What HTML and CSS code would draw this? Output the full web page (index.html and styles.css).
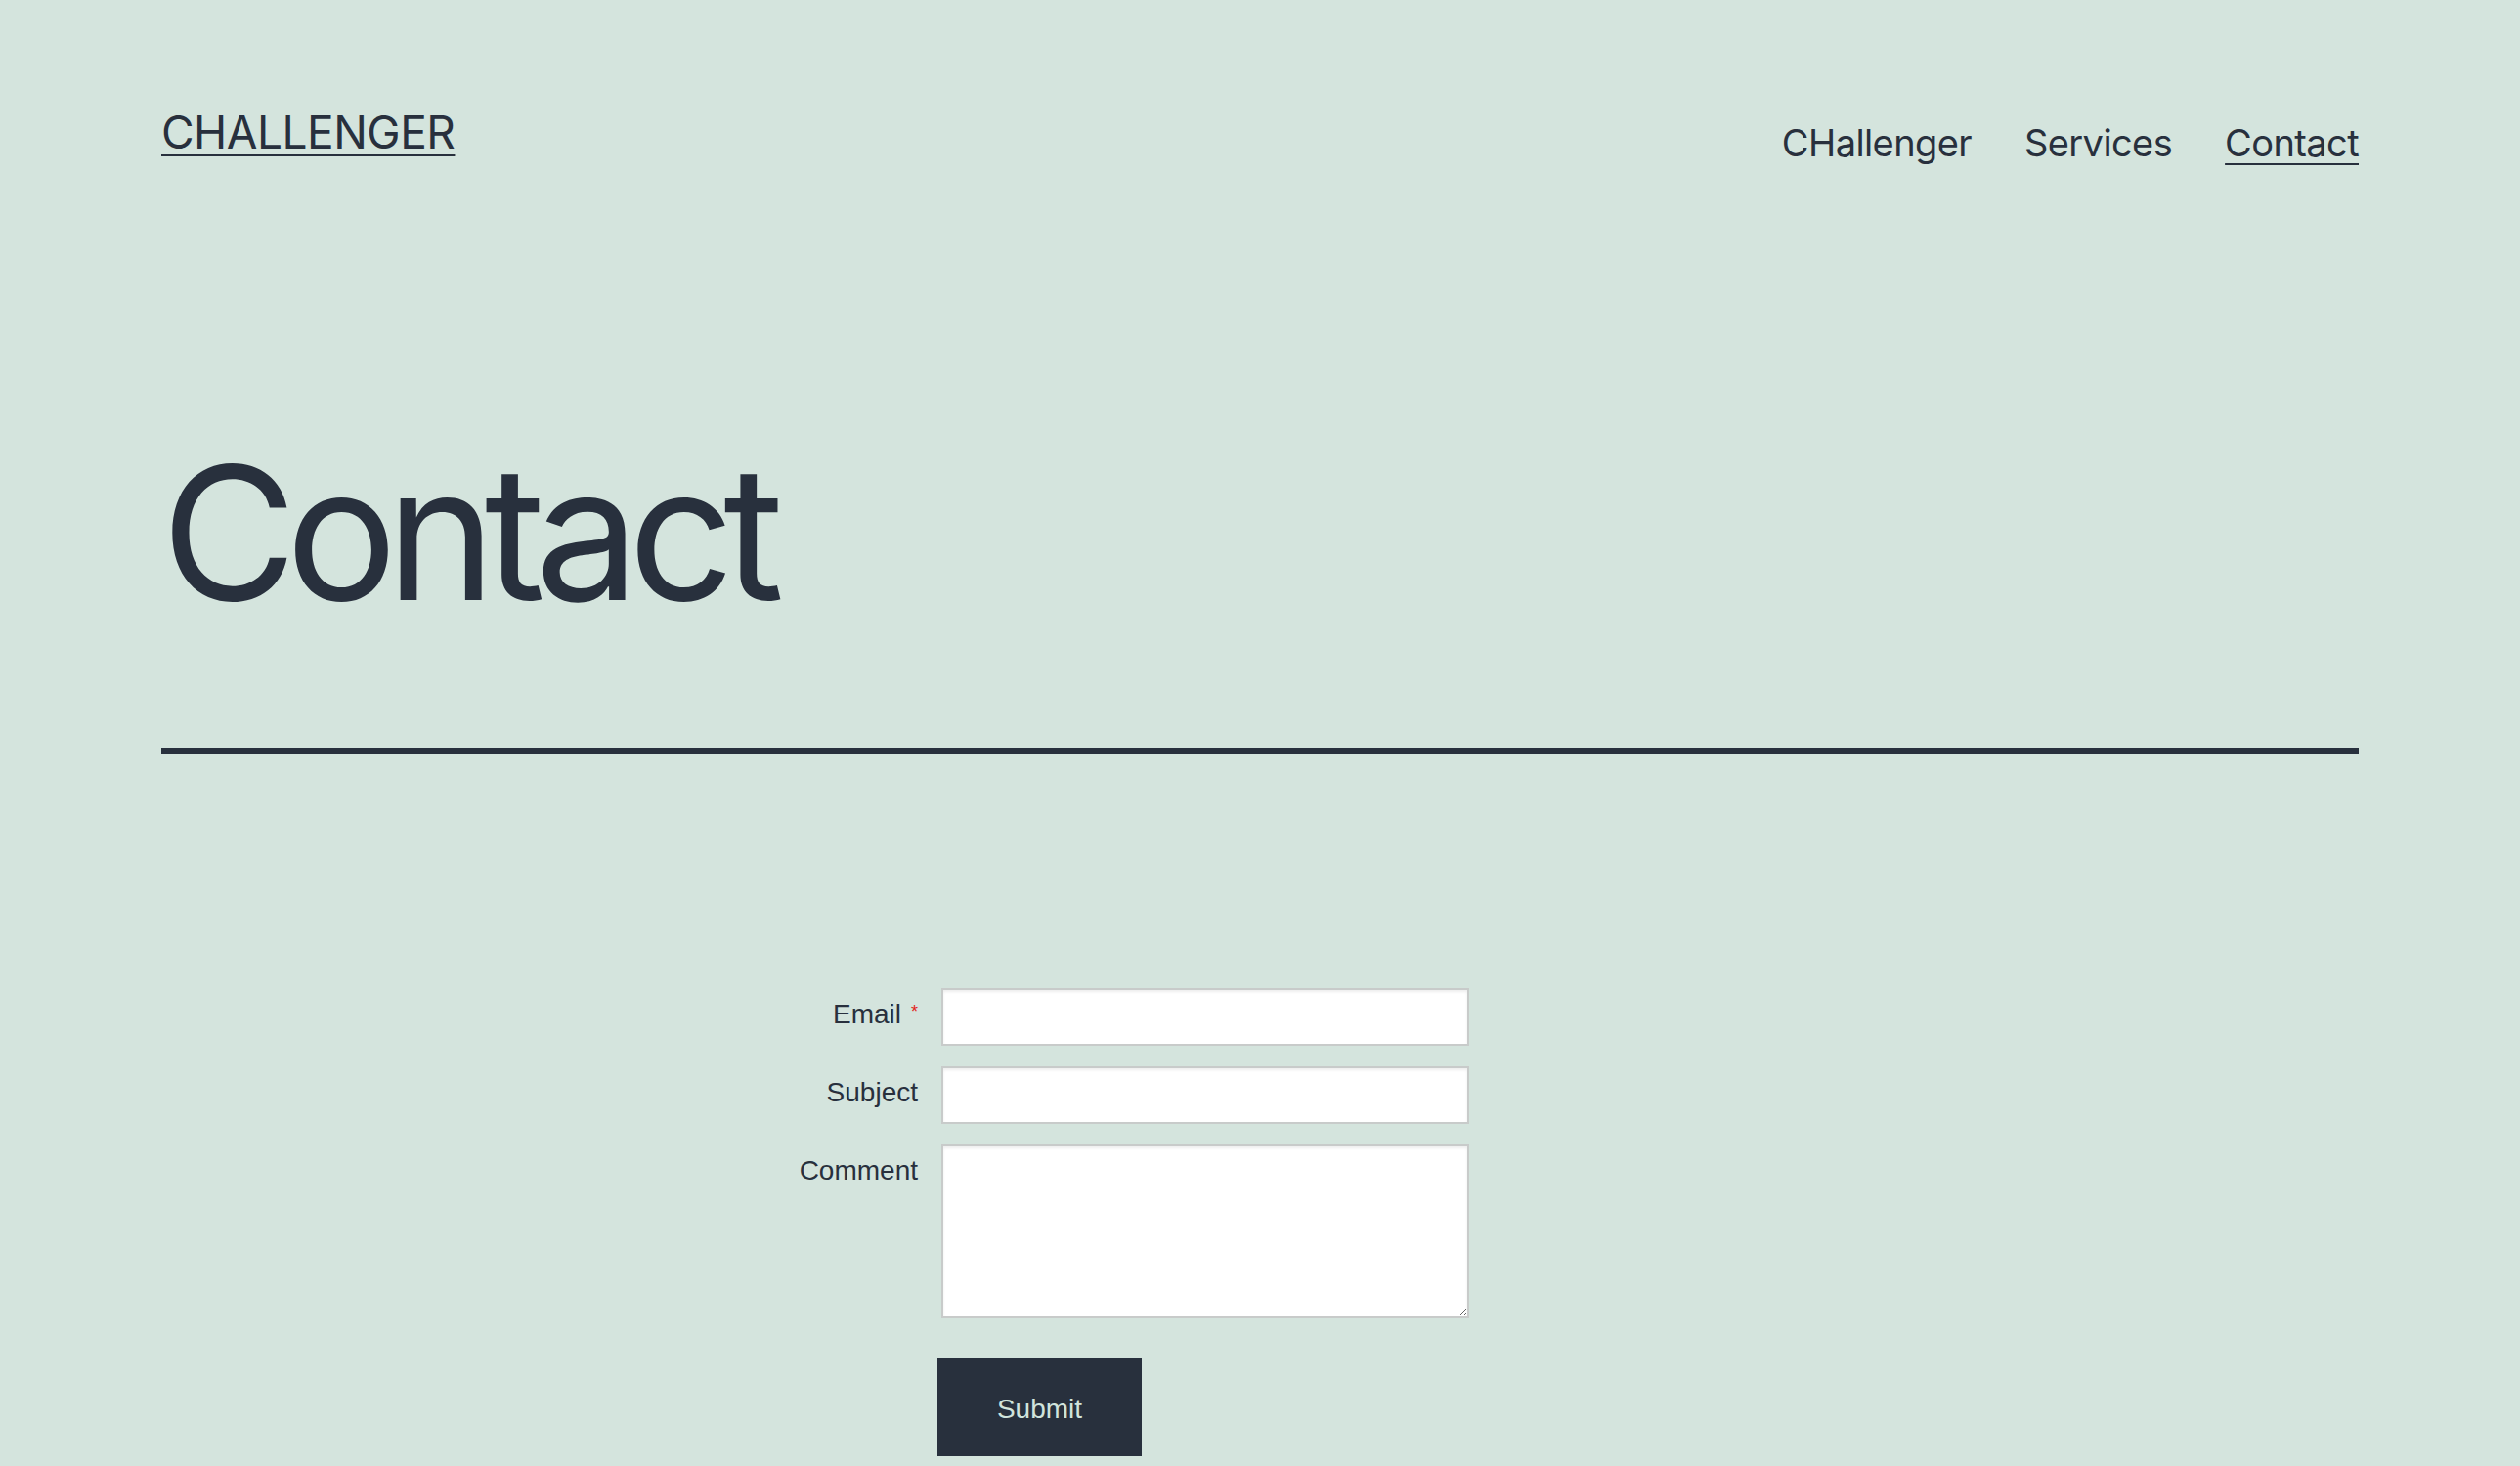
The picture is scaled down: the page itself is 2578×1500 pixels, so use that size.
FILE: index.html
```html
<!DOCTYPE html>
<html lang="en">
<head>
<meta charset="utf-8">
<title>Contact – CHALLENGER</title>
<link rel="stylesheet" href="styles.css">
</head>
<body>
<div class="page">
  <header class="site-header">
    <a class="site-title" href="#">CHALLENGER</a>
    <nav class="site-nav">
      <a href="#">CHallenger</a>
      <a href="#">Services</a>
      <a href="#" class="current">Contact</a>
    </nav>
  </header>
  <h1 class="page-title">Contact</h1>
  <hr class="rule">
  <form class="contact-form">
    <label class="lbl" for="email">Email<span class="req">*</span></label>
    <input class="field" id="email" type="email">
    <label class="lbl" for="subject">Subject</label>
    <input class="field" id="subject" type="text">
    <label class="lbl" for="comment">Comment</label>
    <textarea class="field area" id="comment"></textarea>
    <div class="actions">
      <button type="button" class="submit">Submit</button>
    </div>
  </form>
</div>
</body>
</html>
```
FILE: styles.css
```css
html, body {
  margin: 0;
  padding: 0;
}
body {
  background: #d4e4dd;
  color: #28303d;
  font-family: Inter, "Noto Sans", sans-serif;
  min-height: 1500px;
}
.page {
  padding: 0 165px;
}
.site-header {
  display: flex;
  justify-content: space-between;
  align-items: flex-start;
  padding-top: 112px;
}
.site-title {
  font-size: 46px;
  line-height: 1;
  color: #28303d;
  text-decoration: underline;
  text-decoration-thickness: 2px;
  text-underline-offset: 6px;
  letter-spacing: -0.5px;
}
.site-nav {
  display: flex;
  gap: 54px;
  margin-top: 15px;
}
.site-nav a {
  font-size: 38px;
  line-height: 1;
  color: #28303d;
  text-decoration: none;
  letter-spacing: -0.6px;
}
.site-nav a.current {
  text-decoration: underline;
  text-decoration-thickness: 2px;
  text-underline-offset: 7px;
}
.page-title {
  margin: 285px 0 0;
  font-size: 190px;
  line-height: 1;
  font-weight: 400;
  letter-spacing: -0.06em;
}
.rule {
  margin: 125px 0 0;
  border: 0;
  height: 6px;
  background: #28303d;
}
.contact-form {
  margin: 240px 0 0 499px;
  display: grid;
  grid-template-columns: 275px 540px;
  column-gap: 24px;
  row-gap: 21px;
  font-family: "Liberation Sans", Arial, sans-serif;
}
.lbl {
  text-align: right;
  font-size: 28px;
  line-height: 1;
  padding-top: 13px;
}
.req {
  color: #e2231a;
  font-size: 18px;
  margin-left: 10px;
  vertical-align: 6px;
}
.field {
  box-sizing: border-box;
  height: 59px;
  border: 2px solid #c8cbca;
  background: #fff;
  box-shadow: inset 0 2px 3px rgba(0,0,0,0.07);
  margin: 0;
  padding: 0 10px;
  font: inherit;
  outline: none;
}
.area {
  height: 178px;
  resize: both;
}
.actions {
  grid-column: 2;
  margin-top: 20px;
  margin-left: -4px;
}
.submit {
  width: 209px;
  height: 100px;
  border: 0;
  background: #28303d;
  color: #d1e4dd;
  font-family: "Liberation Sans", Arial, sans-serif;
  font-size: 28px;
  padding: 3px 0 0;
  margin: 0;
}
```
